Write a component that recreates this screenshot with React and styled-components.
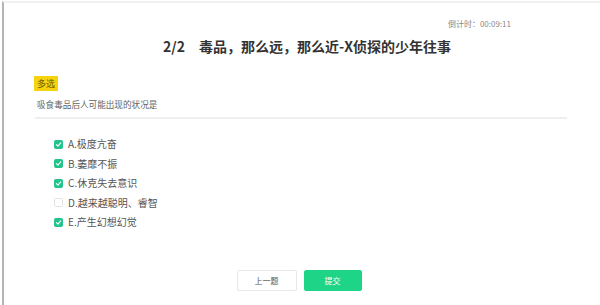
import React from "react";
import styled, { createGlobalStyle } from "styled-components";

const Global = createGlobalStyle`
  html, body { margin: 0; padding: 0; background: #fff; }
  body { font-family: "Noto Sans CJK SC", "Noto Sans", sans-serif; }
`;

const Frame = styled.div`
  box-sizing: border-box;
  width: 600px;
  height: 305px;
  margin-left: 2px;
  border-left: 2px solid #b4b4b4;
  border-top: 2px solid #f1f1f1;
  margin-top: 1px;
  display: flex;
  flex-direction: column;
  padding: 0 35px 0 31px;
`;

const Timer = styled.div`
  align-self: flex-end;
  margin-right: 56px;
  margin-top: 16px;
  font-size: 8px;
  line-height: 10px;
  color: #8a8a8a;
`;

const Title = styled.h1`
  margin: 7px 0 0;
  text-align: center;
  font-size: 14px;
  line-height: 20px;
  font-weight: 700;
  color: #333;
  padding-left: 12px;
`;

const Num = styled.span`
  margin-right: 14px;
`;

const Tag = styled.span`
  align-self: flex-start;
  margin-top: 20px;
  margin-left: -1px;
  background: #f6d30c;
  color: #6a5a00;
  font-size: 9px;
  line-height: 15px;
  padding: 0 3px;
  border-radius: 1px;
`;

const Question = styled.div`
  margin-top: 6px;
  padding-left: 2px;
  font-size: 8.6px;
  line-height: 14px;
  color: #666;
  padding-bottom: 6px;
  border-bottom: 2px solid #efefef;
`;

const Options = styled.ul`
  list-style: none;
  margin: 18px 0 0;
  padding: 0 0 0 19px;
  display: flex;
  flex-direction: column;
  gap: 5.5px;
`;

const Option = styled.li`
  display: flex;
  align-items: center;
  gap: 5px;
  font-size: 10px;
  line-height: 14px;
  color: #555;
`;

const Box = styled.span`
  box-sizing: border-box;
  width: 9px;
  height: 9px;
  border-radius: 1.5px;
  display: flex;
  align-items: center;
  justify-content: center;
  background: ${(p) => (p.$checked ? "#23c38c" : "#fff")};
  border: 1px solid ${(p) => (p.$checked ? "#23c38c" : "#e2e2e2")};
`;

const Buttons = styled.div`
  margin-top: auto;
  margin-bottom: 15px;
  display: flex;
  justify-content: center;
  gap: 7px;
  padding-right: 4px;
`;

const Button = styled.button`
  box-sizing: border-box;
  width: ${(p) => (p.$primary ? "58px" : "60px")};
  height: 21px;
  border-radius: 2px;
  font-family: inherit;
  font-size: 8px;
  cursor: pointer;
  color: ${(p) => (p.$primary ? "#fff" : "#555")};
  background: ${(p) => (p.$primary ? "#1ed486" : "#fff")};
  border: 1px solid ${(p) => (p.$primary ? "#1ed486" : "#e8e8e8")};
`;

const Check = () => (
  <svg width="7" height="7" viewBox="0 0 10 10">
    <path d="M2 5.2 L4.2 7.3 L8.2 2.8" fill="none" stroke="#fff" strokeWidth="1.6" strokeLinecap="round" strokeLinejoin="round" />
  </svg>
);

const options = [
  { label: "A.极度亢奋", checked: true },
  { label: "B.萎靡不振", checked: true },
  { label: "C.休克失去意识", checked: true },
  { label: "D.越来越聪明、睿智", checked: false },
  { label: "E.产生幻想幻觉", checked: true },
];

export default function App() {
  return (
    <>
      <Global />
      <Frame>
        <Timer>倒计时：00:09:11</Timer>
        <Title>
          <Num>2/2</Num>毒品，那么远，那么近-X侦探的少年往事
        </Title>
        <Tag>多选</Tag>
        <Question>吸食毒品后人可能出现的状况是</Question>
        <Options>
          {options.map((o) => (
            <Option key={o.label}>
              <Box $checked={o.checked}>{o.checked && <Check />}</Box>
              {o.label}
            </Option>
          ))}
        </Options>
        <Buttons>
          <Button>上一题</Button>
          <Button $primary>提交</Button>
        </Buttons>
      </Frame>
    </>
  );
}
